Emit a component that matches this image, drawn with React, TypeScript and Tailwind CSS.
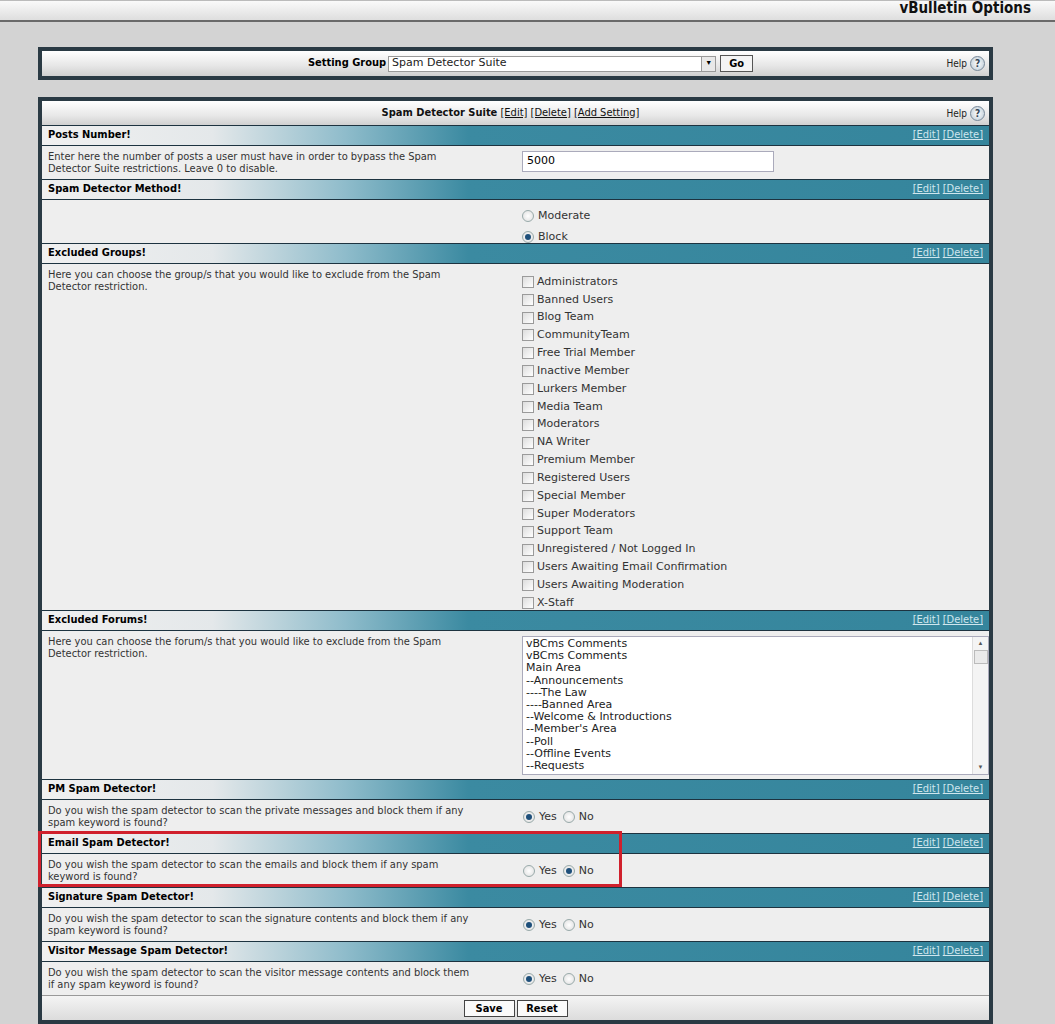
import React from "react";

const cond = { fontFamily: '"DejaVu Sans Condensed","DejaVu Sans",sans-serif' };
const ver = { fontFamily: '"DejaVu Sans",Verdana,sans-serif' };

function Header({ title }: { title: string }) {
  return (
    <div className="h-[21px] flex items-center justify-between px-[6px] border-t border-b border-[#1d3340] bg-[linear-gradient(90deg,#f0f0f0_0%,#e4e8ea_18%,#8fbccb_32%,#3b8aa1_45%,#35859c_100%)]">
      <span className="text-[11px] font-bold text-black" style={cond}>{title}</span>
      <span className="text-[11px] text-[#cfe6ee]" style={cond}><span className="underline">[Edit]</span> <span className="underline">[Delete]</span></span>
    </div>
  );
}

function Row({ desc, children, h }: { desc: string; children?: React.ReactNode; h?: string }) {
  return (
    <div className={`flex bg-[#eeeeee] ${h ?? "h-[33px]"}`}>
      <div className="w-[476px] pl-[6px] pr-[40px] pt-[5px] text-[11px] leading-[12px] text-[#333]" style={cond}>{desc}</div>
      <div className="flex-1 pl-[4px] pt-[5px]">{children}</div>
    </div>
  );
}

function Radio({ on, label }: { on: boolean; label: string }) {
  return (
    <span className="inline-flex items-center gap-[4px] mr-[6px] text-[11px] text-[#333]" style={ver}>
      <span className="w-[12px] h-[12px] rounded-full border border-[#9aa] bg-[radial-gradient(circle,#fff,#ddd)] flex items-center justify-center">
        {on && <span className="w-[6px] h-[6px] rounded-full bg-[#1e4f7a]" />}
      </span>
      {label}
    </span>
  );
}

function YesNo({ yes }: { yes: boolean }) {
  return (
    <div className="pt-[4px] pl-[1px] flex">
      <Radio on={yes} label="Yes" />
      <Radio on={!yes} label="No" />
    </div>
  );
}

const groups = ["Administrators","Banned Users","Blog Team","CommunityTeam","Free Trial Member","Inactive Member","Lurkers Member","Media Team","Moderators","NA Writer","Premium Member","Registered Users","Special Member","Super Moderators","Support Team","Unregistered / Not Logged In","Users Awaiting Email Confirmation","Users Awaiting Moderation","X-Staff"];
const forums = ["vBCms Comments","vBCms Comments","Main Area","--Announcements","----The Law","----Banned Area","--Welcome & Introductions","--Member's Area","--Poll","--Offline Events","--Requests"];

function Help() {
  return (
    <span className="flex items-center gap-[3px] text-[10px] text-[#222]" style={cond}>
      Help
      <span className="w-[15px] h-[15px] rounded-full border border-[#789] bg-[radial-gradient(circle,#fff,#b8c8d4)] text-[10px] font-bold text-[#345] flex items-center justify-center">?</span>
    </span>
  );
}

export default function App() {
  return (
    <div className="w-[1055px] h-[1024px] bg-[#d3d3d3] relative overflow-hidden">
      <div className="h-[22px] bg-[linear-gradient(180deg,#fafafa,#dedede)] border-t border-[#bbb] border-b-2 border-b-[#6a6a6a] flex justify-end items-end pb-[1px] pr-[24px]">
        <span className="text-[15px] font-bold text-[#111]" style={cond}>vBulletin Options</span>
      </div>

      <div className="ml-[38px] mt-[25px] w-[955px] border-[3px] border-double border-[#2a3a44] bg-[#2a3a44] p-[1px]">
        <div className="h-[25px] bg-[linear-gradient(180deg,#ffffff,#e6e6e6_60%,#cfcfcf)] flex items-center relative">
          <div className="flex-1 flex justify-center items-center gap-[2px] pl-[150px]">
            <span className="text-[11px] font-bold" style={cond}>Setting Group</span>
            <div className="w-[328px] h-[16px] bg-white border border-[#999] flex items-center justify-between pl-[3px]">
              <span className="text-[11px] text-[#222]" style={ver}>Spam Detector Suite</span>
              <span className="w-[14px] h-[14px] bg-[#e8e8e8] border-l border-[#999] text-[7px] flex items-center justify-center">▼</span>
            </div>
            <button className="ml-[2px] w-[33px] h-[17px] border border-[#555] bg-[#f4f4f4] text-[11px] font-bold" style={cond}>Go</button>
          </div>
          <div className="w-[120px] flex justify-end pr-[4px]"><Help /></div>
        </div>
      </div>

      <div className="ml-[38px] mt-[17px] w-[955px] border-[3px] border-double border-[#2a3a44] bg-[#2a3a44] p-[1px]">
        <div className="h-[24px] bg-[linear-gradient(180deg,#ffffff,#e8e8e8_60%,#d0d0d0)] flex items-center">
          <div className="flex-1 text-center pl-[110px] text-[11px] text-[#111]" style={cond}>
            <b>Spam Detector Suite</b> <span className="underline">[Edit]</span> <span className="underline">[Delete]</span> <span className="underline">[Add Setting]</span>
          </div>
          <div className="w-[120px] flex justify-end pr-[4px]"><Help /></div>
        </div>

        <Header title="Posts Number!" />
        <Row desc="Enter here the number of posts a user must have in order to bypass the Spam Detector Suite restrictions. Leave 0 to disable.">
          <div className="w-[252px] h-[21px] bg-white border border-[#aab] text-[11px] pl-[4px] flex items-center" style={ver}>5000</div>
        </Row>

        <Header title="Spam Detector Method!" />
        <Row desc="" h="h-[43px]">
          <div className="flex flex-col gap-[4px] pt-[3px]">
            <Radio on={false} label="Moderate" />
            <Radio on={true} label="Block" />
          </div>
        </Row>

        <Header title="Excluded Groups!" />
        <Row desc="Here you can choose the group/s that you would like to exclude from the Spam Detector restriction." h="h-[346px]">
          <div className="pt-[4px]">
            {groups.map((g) => (
              <div key={g} className="h-[17.85px] flex items-center gap-[3px] text-[11px] text-[#333]" style={ver}>
                <span className="w-[12px] h-[12px] border border-[#9a9a9a] bg-[linear-gradient(135deg,#ddd,#fff)]" />
                {g}
              </div>
            ))}
          </div>
        </Row>

        <Header title="Excluded Forums!" />
        <Row desc="Here you can choose the forum/s that you would like to exclude from the Spam Detector restriction." h="h-[148px]">
          <div className="w-[467px] h-[139px] bg-white border border-[#aab] flex overflow-hidden">
            <div className="flex-1 pl-[3px] pt-[1px] overflow-hidden">
              {forums.map((f, i) => (
                <div key={i} className="h-[12.2px] text-[11px] leading-[12px] text-[#222] whitespace-pre" style={ver}>{f}</div>
              ))}
            </div>
            <div className="w-[16px] bg-[#f4f4f4] border-l border-[#ddd] flex flex-col items-center text-[6px] text-[#555]">
              <span className="mt-[2px]">▲</span>
              <span className="w-[14px] h-[14px] border border-[#bbb] bg-[#eaeaea] mt-[2px]" />
              <span className="mt-auto mb-[2px]">▼</span>
            </div>
          </div>
        </Row>

        <Header title="PM Spam Detector!" />
        <Row desc="Do you wish the spam detector to scan the private messages and block them if any spam keyword is found?"><YesNo yes={true} /></Row>
        <Header title="Email Spam Detector!" />
        <Row desc="Do you wish the spam detector to scan the emails and block them if any spam keyword is found?"><YesNo yes={false} /></Row>
        <Header title="Signature Spam Detector!" />
        <Row desc="Do you wish the spam detector to scan the signature contents and block them if any spam keyword is found?"><YesNo yes={true} /></Row>
        <Header title="Visitor Message Spam Detector!" />
        <Row desc="Do you wish the spam detector to scan the visitor message contents and block them if any spam keyword is found?"><YesNo yes={true} /></Row>

        <div className="h-[25px] bg-[linear-gradient(180deg,#f4f4f4,#dcdcdc)] border-t border-[#999] flex items-center justify-center gap-[2px]">
          <button className="w-[51px] h-[17px] bg-[#fafafa] border border-[#444] text-[11px] font-bold" style={cond}>Save</button>
          <button className="w-[51px] h-[17px] bg-[#fafafa] border border-[#444] text-[11px] font-bold" style={cond}>Reset</button>
        </div>
      </div>

      <div className="absolute left-[38px] top-[831px] w-[584px] h-[56px] border-[3px] border-[#d0202c]" />
    </div>
  );
}
